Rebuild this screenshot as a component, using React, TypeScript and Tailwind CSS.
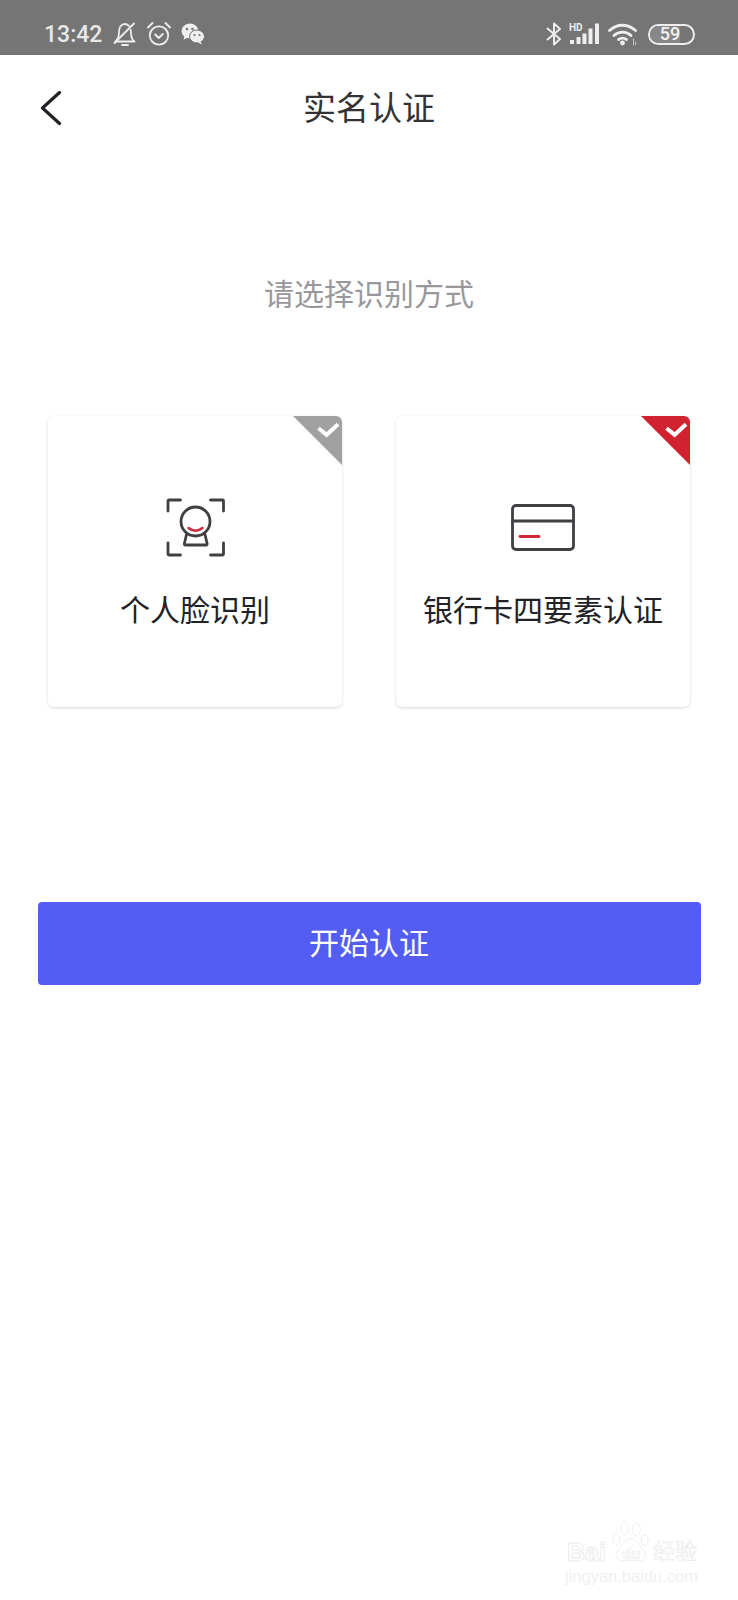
const cjk = "font-['Noto_Sans_CJK_SC','Noto_Sans',sans-serif]";

function BellOff() {
  return (
    <svg width="24" height="24" viewBox="0 0 24 24" fill="none" stroke="#eeeeee" strokeWidth="1.8" strokeLinecap="round" strokeLinejoin="round" className="ml-[11px]">
      <path d="M2.500 19.500h19c-2-1.500-3-3.500-3.200-6l-.6-5.500M16 3.800C14.800 2.700 13.400 2 12 2 9 2 6.600 4.500 6.300 7.500l-.6 6c-.2 2-1.500 4.500-3.200 6" />
      <path d="M1.500 21 21 1.500" />
      <path d="M9 23h6" />
    </svg>
  );
}

function Alarm() {
  return (
    <svg width="24" height="24" viewBox="0 0 24 24" fill="none" stroke="#eeeeee" strokeWidth="1.8" strokeLinecap="round" strokeLinejoin="round" className="ml-[10px]">
      <circle cx="12" cy="13.500" r="9.200" />
      <path d="M1 5.500 5.500 1M23 5.500 18.500 1" />
      <path d="M8.200 12.500 11.700 16 15.800 12" />
    </svg>
  );
}

function WeChat() {
  return (
    <svg width="24" height="22" viewBox="0 0 24 22" className="ml-[10px]">
      <ellipse cx="9" cy="8" rx="8.500" ry="7.500" fill="#eeeeee" />
      <path d="M3.500 12.500 2.500 17 7 14z" fill="#eeeeee" />
      <circle cx="6" cy="6" r="1.300" fill="#757575" />
      <circle cx="11.500" cy="6" r="1.300" fill="#757575" />
      <ellipse cx="16" cy="13.500" rx="7.500" ry="6.500" fill="#eeeeee" stroke="#757575" strokeWidth="1" />
      <path d="M19.500 18.500 21 21.500 17 19.500z" fill="#eeeeee" />
      <circle cx="13.500" cy="12" r="1.100" fill="#757575" />
      <circle cx="18.500" cy="12" r="1.100" fill="#757575" />
    </svg>
  );
}

function Bluetooth() {
  return (
    <svg width="16" height="24" viewBox="0 0 16 24" fill="none" stroke="#eeeeee" strokeWidth="2" strokeLinejoin="round" strokeLinecap="round">
      <path d="M1.500 6.500 14 17 8 22.500V1.500L14 7 1.500 17.500" />
    </svg>
  );
}

function Signal() {
  return (
    <svg width="30" height="22" viewBox="0 0 30 22" className="ml-[7px] overflow-visible">
      <text x="0" y="8" fontSize="10" fontWeight="700" fill="#eeeeee" fontFamily="Roboto, sans-serif">HD</text>
      <rect x="1" y="17" width="4" height="4" fill="#eeeeee" />
      <rect x="7.500" y="14" width="4" height="7" fill="#eeeeee" />
      <rect x="13.500" y="10.500" width="4" height="10.500" fill="#eeeeee" />
      <rect x="19.500" y="5.500" width="4" height="15.500" fill="#eeeeee" />
      <rect x="26" y="0.500" width="4" height="20.500" fill="#eeeeee" />
    </svg>
  );
}

function Wifi() {
  return (
    <svg width="30" height="23" viewBox="0 0 30 23" fill="none" stroke="#eeeeee" strokeWidth="2.800" strokeLinecap="round" className="ml-[9px]">
      <path d="M1.500 7.500C9 .5 20 .5 27.500 7.500" />
      <path d="M6 12.500C11 8 18 8 23 12.500" />
      <path d="M10.500 16.500C13 14.800 16 14.800 18.500 16.500" />
      <circle cx="14.500" cy="20" r="2.400" fill="#eeeeee" stroke="none" />
      <path d="M25.500 22v-6M27.500 22v-3" stroke="#c4c4c4" strokeWidth="1" />
    </svg>
  );
}

function Battery() {
  return (
    <div className="relative ml-[10px] flex h-[21px] w-[47px] items-center overflow-hidden rounded-full border-2 border-[#eeeeee]">
      <div className="h-full w-[30px] bg-[#878787]" />
      <span className="absolute inset-0 flex items-center justify-center pr-[3px] font-['Roboto',sans-serif] text-[18px] leading-none font-medium text-[#f2f2f2]">59</span>
    </div>
  );
}

function FaceIcon() {
  return (
    <svg width="60" height="60" viewBox="0 0 60 60" fill="none" strokeLinecap="round" strokeLinejoin="round">
      <g stroke="#3f3f44" strokeWidth="2.800">
        <path d="M3 14V4Q3 3 4 3H15.500" />
        <path d="M45.500 3H57.500Q58.500 3 58.500 4V14" />
        <path d="M3 46V57Q3 58 4 58H15.500" />
        <path d="M45.500 58H57.500Q58.500 58 58.500 57V46" />
        <circle cx="30.500" cy="24.500" r="14.500" />
        <path d="M21.500 37.500 19.500 46Q19 48 20.500 48H41Q42.500 48 42 46L40 37.500" />
      </g>
      <path d="M23.500 31Q30.500 36.500 37.500 31" stroke="#d0283a" strokeWidth="2.400" />
    </svg>
  );
}

function CardIcon() {
  return (
    <svg width="64" height="47" viewBox="0 0 64 47" fill="none" strokeLinecap="round">
      <rect x="1.500" y="1.500" width="61" height="44" rx="3.500" stroke="#3f3f44" strokeWidth="2.800" />
      <path d="M1.500 17H62.500" stroke="#3f3f44" strokeWidth="2.800" />
      <path d="M9 32.500H28" stroke="#d0283a" strokeWidth="2.800" />
    </svg>
  );
}

function Corner({ color }: { color: string }) {
  return (
    <svg width="49" height="49" viewBox="0 0 49 49" className="absolute top-0 right-0">
      <path d="M0 0H49V49z" fill={color} />
      <path d="M25.500 12.200 33.700 18.800 45 8.200" fill="none" stroke="#ffffff" strokeWidth="4" />
    </svg>
  );
}

function Option({ icon, label, color }: { icon: React.ReactNode; label: string; color: string }) {
  return (
    <div className="relative flex h-[291px] w-[294px] flex-col items-center overflow-hidden rounded-[6px] bg-white shadow-[0_1px_3px_rgba(0,0,0,0.16)]">
      <Corner color={color} />
      <div className="mt-[75px] flex h-[72px] items-center justify-center">{icon}</div>
      <div className={`mt-[25px] text-[30px] leading-[40px] font-normal text-[#222226] ${cjk}`}>{label}</div>
    </div>
  );
}

function Watermark() {
  return (
    <div className="absolute top-[1518px] left-[565px] h-[70px] w-[140px]">
      <span className="absolute top-[22px] left-[2px] font-['Liberation_Sans',sans-serif] text-[25px] leading-none font-bold text-white [-webkit-text-stroke:1px_#ececec]">Bai</span>
      <svg width="38" height="42" viewBox="0 0 42 46" fill="none" stroke="#ececec" strokeWidth="1" className="absolute top-[3px] left-[47px]">
        <ellipse cx="5" cy="20" rx="4" ry="6" />
        <ellipse cx="14" cy="8" rx="4.500" ry="7" />
        <ellipse cx="27" cy="9" rx="4.500" ry="7" />
        <ellipse cx="36" cy="21" rx="4" ry="6" />
        <path d="M21 19C14 19 12 27 6 32 2 37 6 45 13 44 18 43 24 43 29 44 36 45 40 37 35 32 30 27 27 19 21 19z" />
      </svg>
      <span className="absolute top-[28px] left-[57px] font-['Liberation_Sans',sans-serif] text-[15px] leading-none font-bold text-white [-webkit-text-stroke:0.7px_#ececec]">du</span>
      <span className={`absolute top-[20px] left-[88px] text-[22px] leading-none text-white [-webkit-text-stroke:0.7px_#ececec] ${cjk}`}>经验</span>
      <span className="absolute top-[50px] left-0 font-['Liberation_Sans',sans-serif] text-[16.500px] leading-none text-[#f0f0f0]">jingyan.baidu.com</span>
    </div>
  );
}

export default function App() {
  return (
    <div className="relative h-[1600px] w-[738px] overflow-hidden bg-white">
      <div className="flex h-[55px] items-center bg-[#757575] pt-[13px] pr-[43px] pl-[44px]">
        <span className="font-['Roboto',sans-serif] text-[23px] leading-none font-medium text-[#e8e8e8]">13:42</span>
        <BellOff />
        <Alarm />
        <WeChat />
        <div className="ml-auto flex items-center">
          <Bluetooth />
          <Signal />
          <Wifi />
          <Battery />
        </div>
      </div>

      <header className="relative flex h-[102px] items-center justify-center">
        <svg width="22" height="36" viewBox="0 0 22 36" fill="none" stroke="#222226" strokeWidth="3.200" strokeLinecap="round" strokeLinejoin="round" className="absolute top-[36px] left-[40px]">
          <path d="M19.500 1.500 2.500 17 19.500 32.500" />
        </svg>
        <h1 className={`text-[33px] leading-[44px] font-normal text-[#333336] ${cjk}`}>实名认证</h1>
      </header>

      <p className={`mt-[115px] text-center text-[30px] leading-[40px] font-normal text-[#98989c] ${cjk}`}>请选择识别方式</p>

      <div className="mt-[104px] flex gap-[54px] pl-[48px]">
        <Option icon={<FaceIcon />} label="个人脸识别" color="#a1a1a1" />
        <Option icon={<CardIcon />} label="银行卡四要素认证" color="#d0232f" />
      </div>

      <div className="mt-[195px] px-[37.500px]">
        <button className={`flex h-[83px] w-full items-center justify-center rounded-[4px] bg-[#535df2] pb-[4px] text-[30px] font-normal text-white ${cjk}`}>开始认证</button>
      </div>

      <Watermark />
    </div>
  );
}
